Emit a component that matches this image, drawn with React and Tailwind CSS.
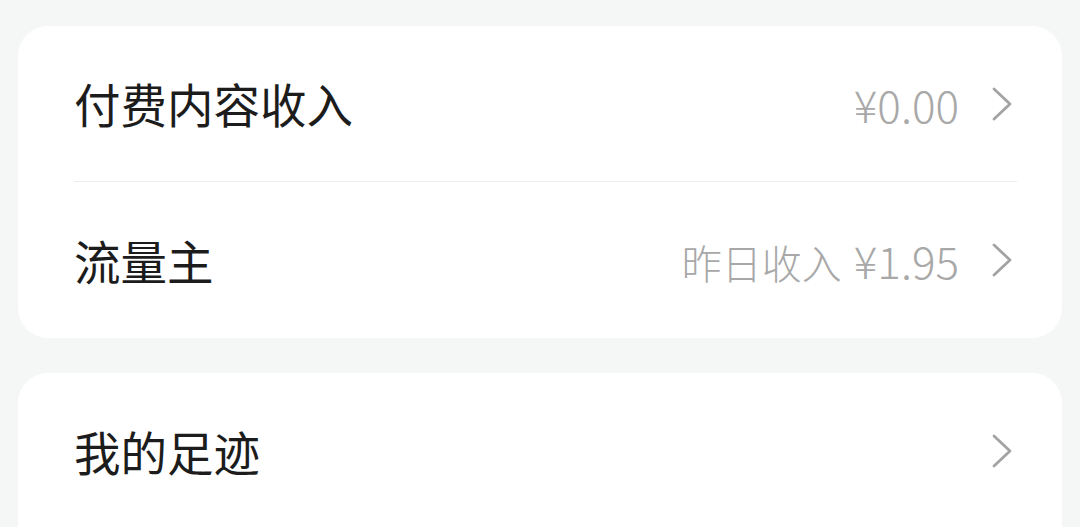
function Chevron() {
  return (
    <svg width="22" height="36" viewBox="0 0 22 36" fill="none" className="mr-[4px] shrink-0">
      <path d="M3 3 L19 18 L3 33" stroke="#a3a3a3" strokeWidth="2.8" strokeLinecap="round" strokeLinejoin="round" />
    </svg>
  );
}

function Row({ label, note, amount, divider }) {
  return (
    <div className={"flex h-[156px] items-center " + (divider ? "border-b border-[#ededed]" : "")}>
      <span className="text-[46.5px] leading-none text-[#1c1c1c]">{label}</span>
      <div className="ml-auto flex items-center gap-[32px]">
        {amount && (
          <span className="flex items-baseline gap-[12px] leading-none text-[#a8a8a8]">
            {note && <span className="text-[40px] font-light">{note}</span>}
            <span className="text-[44px] font-light">{amount}</span>
          </span>
        )}
        <Chevron />
      </div>
    </div>
  );
}

export default function App() {
  return (
    <main
      className="flex h-[527px] w-[1080px] flex-col gap-[35px] overflow-hidden bg-[#f5f6f6] px-[18px] pt-[26px]"
      style={{ fontFamily: '"Noto Sans CJK SC", "Noto Sans", sans-serif' }}
    >
      <section className="rounded-[30px] bg-white pl-[56px] pr-[45px]">
        <Row label="付费内容收入" amount="¥0.00" divider />
        <Row label="流量主" note="昨日收入" amount="¥1.95" />
      </section>
      <section className="shrink-0 rounded-[30px] bg-white pl-[56px] pr-[45px]">
        <Row label="我的足迹" />
        <Row label="" />
      </section>
    </main>
  );
}
